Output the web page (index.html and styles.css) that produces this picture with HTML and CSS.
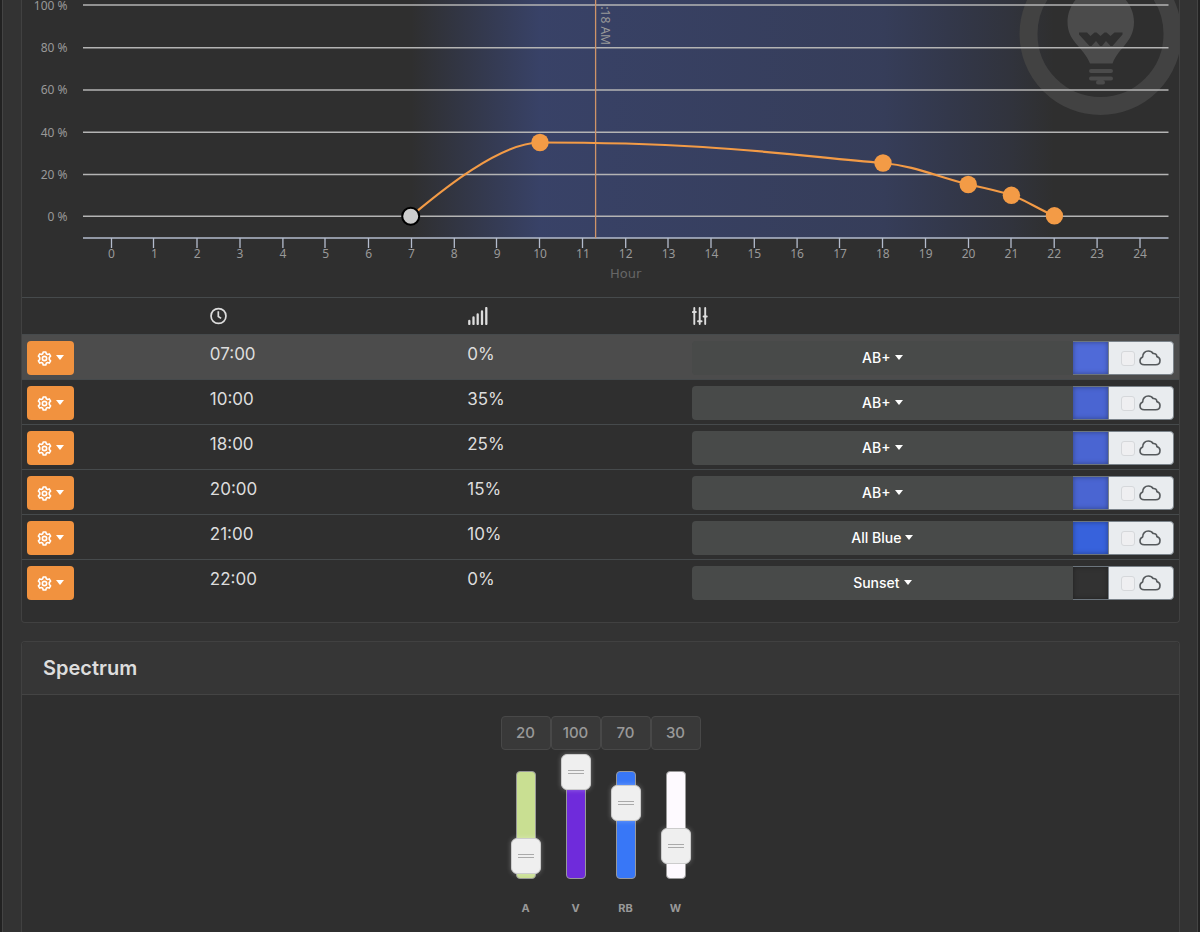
FILE: index.html
```html
<!DOCTYPE html>
<html lang="en">
<head>
<meta charset="utf-8">
<title>Light schedule</title>
<link rel="stylesheet" href="styles.css">
</head>
<body>
<svg class="defs" aria-hidden="true">
  <symbol id="gear" viewBox="0 0 16 16"><g fill="none" stroke="currentColor" stroke-width="1.700" stroke-linejoin="round"><path d="M6.600 1h2.800l.5 2 1.200.7 2-.6 1.400 2.400-1.400 1.500v2l1.400 1.500-1.400 2.400-2-.6-1.200.7-.5 2H6.600l-.5-2-1.200-.7-2 .6-1.400-2.400 1.400-1.500V7L1.500 5.500l1.400-2.400 2 .6L6.100 3z"/><circle cx="8" cy="8" r="2.300"/></g></symbol>
  <symbol id="cloud" viewBox="0 0 22 16"><path d="M5.300 14.800C2.800 14.800 1 13.100 1 10.800 1 9 2 7.500 3.700 6.900 3.500 3.400 6.200 1 9.300 1c2.200 0 3.900 1 4.800 2.500 2.100-.2 3.700 1 3.800 3.100 2 .5 3.100 1.900 3.100 3.900 0 2.500-1.800 4.300-4.300 4.300z" fill="none" stroke="currentColor" stroke-width="1.600" stroke-linejoin="round"/></symbol>
</svg>
<main class="page">
  <section class="card">
    <svg class="chart" viewBox="22 0 1157 297" role="img" aria-label="Intensity by hour">
      <defs>
        <linearGradient id="sky" gradientUnits="userSpaceOnUse" x1="411" x2="1054" y1="0" y2="0">
          <stop offset="0" stop-color="#4a6cf0" stop-opacity="0"/>
          <stop offset=".2" stop-color="#4f70f0" stop-opacity=".29"/>
          <stop offset=".733" stop-color="#4f70f0" stop-opacity=".22"/>
          <stop offset=".867" stop-color="#4a6cf0" stop-opacity=".12"/>
          <stop offset=".933" stop-color="#4a6cf0" stop-opacity=".07"/>
          <stop offset="1" stop-color="#4a6cf0" stop-opacity="0"/>
        </linearGradient>
      </defs>
      <rect x="411" y="0" width="643" height="238" fill="url(#sky)"/>
      <g class="watermark">
        <circle cx="1100.500" cy="34" r="72" fill="none" stroke="#424242" stroke-width="18"/>
        <path d="M1067.500 22C1067.500 4 1082-12 1100.500-12S1134 4 1134 22c0 20-15 25-21.500 41.500h-22.500C1083 46 1067.500 42 1067.500 22z" fill="#4b4b4b"/>
        <path d="M1079 32.500h8l3.500 3.500 4-3.500h2l4 3.500 4-3.500h2l4 3.500 4-3.500h8v2l-10 11.500h-2l-4.500-5-4 5h-2l-4-5-4.500 5h-2l-10.500-11.500z" fill="#2f2f2f"/>
        <path d="M1091 71h20M1091 78.500h20M1098 82.500h5" stroke="#4b4b4b" stroke-width="4" stroke-linecap="round"/>
      </g>
      <path class="grid" d="M83 5h1085.500M83 47.800h1085.500M83 90h1085.500M83 132.200h1085.500M83 174.400h1085.500M83 216.300h1085.500"/>
      <path class="axis" d="M83 238h1085.500M111.500 238v10M153.500 238v10M197 238v10M240 238v10M282.900 238v10M325 238v10M368.500 238v10M411.500 238v10M454.300 238v10M496.500 238v10M539.500 238v10M582.500 238v10M625.700 238v10M668 238v10M711 238v10M754.300 238v10M797.100 238v10M839.500 238v10M882.500 238v10M925.500 238v10M968.500 238v10M1011 238v10M1054.200 238v10M1097.100 238v10M1140 238v10"/>
      <g class="labels" text-anchor="end">
        <text x="67.500" y="10">100 %</text><text x="67.500" y="52">80 %</text><text x="67.500" y="94">60 %</text><text x="67.500" y="137">40 %</text><text x="67.500" y="179">20 %</text><text x="67.500" y="221">0 %</text>
      </g>
      <g class="labels" text-anchor="middle">
        <text x="111.500" y="258">0</text><text x="154.400" y="258">1</text><text x="197.200" y="258">2</text><text x="240" y="258">3</text><text x="282.900" y="258">4</text><text x="325.800" y="258">5</text><text x="368.600" y="258">6</text><text x="411.500" y="258">7</text><text x="454.300" y="258">8</text><text x="497.200" y="258">9</text><text x="540" y="258">10</text><text x="582.900" y="258">11</text><text x="625.700" y="258">12</text><text x="668.600" y="258">13</text><text x="711.400" y="258">14</text><text x="754.300" y="258">15</text><text x="797.100" y="258">16</text><text x="840" y="258">17</text><text x="882.800" y="258">18</text><text x="925.700" y="258">19</text><text x="968.500" y="258">20</text><text x="1011.400" y="258">21</text><text x="1054.200" y="258">22</text><text x="1097.100" y="258">23</text><text x="1140" y="258">24</text>
      </g>
      <text class="axis-title" x="625.700" y="278" text-anchor="middle">Hour</text>
      <path class="now" d="M595.600 0v238"/>
      <text class="now-label" text-anchor="end" transform="translate(601 45) rotate(90)">:18 AM</text>
      <path class="curve" d="M411 216C425 205 495 142.500 540 142.500C711 142.500 780 154 882.800 163C915 166 935 176 968.500 184.500C985 188 995 190 1011.400 195C1025 200 1040 210 1054.200 215.800"/>
      <g class="points"><circle cx="540" cy="142.500" r="8.700"/><circle cx="883" cy="163" r="8.700"/><circle cx="968.200" cy="184.500" r="8.700"/><circle cx="1011.400" cy="195.300" r="8.700"/><circle cx="1054.400" cy="215.800" r="8.700"/></g>
      <circle class="active-point" cx="410.700" cy="216.200" r="8.500"/>
    </svg>
    <table class="schedule">
      <colgroup><col class="col-menu"><col class="col-time"><col class="col-level"><col></colgroup>
      <thead>
        <tr>
          <th></th>
          <th><svg class="head-icon" width="17" height="18" viewBox="0 0 18 18" role="img" aria-label="Time"><g fill="none" stroke="#ddd" stroke-width="1.800"><circle cx="9" cy="9" r="7.900"/><path d="M8.800 4v5.500l3 2"/></g></svg></th>
          <th><svg class="head-icon" width="22" height="18" viewBox="0 0 22 18" role="img" aria-label="Intensity"><path d="M2.300 17v-3M6.500 17v-6.500M10.700 17V7.500M15 17V4.500M19.300 17V1" fill="none" stroke="#ddd" stroke-width="2.300" stroke-linecap="round"/></svg></th>
          <th><svg class="head-icon" width="16" height="18" viewBox="0 0 16 18" role="img" aria-label="Spectrum"><path d="M2.300 1v16M7.700 1v16M13.200 1v16M.9 5h3M6 14.200h3.600M11.600 9.500h3.200" fill="none" stroke="#ddd" stroke-width="1.900" stroke-linecap="round"/></svg></th>
        </tr>
      </thead>
      <tbody id="rows"></tbody>
    </table>
  </section>

  <section class="card spectrum">
    <h2 class="card-title">Spectrum</h2>
    <div class="mixer" id="mixer"></div>
  </section>
</main>
<script src="app.js"></script>
</body>
</html>
```

FILE: app.js
```js
const points = [
  ["07:00", "0%", "AB+", "#4f6ad8"],
  ["10:00", "35%", "AB+", "#4a65d2"],
  ["18:00", "25%", "AB+", "#4a65d2"],
  ["20:00", "15%", "AB+", "#4a65d2"],
  ["21:00", "10%", "All Blue", "#3762dc"],
  ["22:00", "0%", "Sunset", "#323232"]
];
document.getElementById("rows").innerHTML = points.map(([time, level, preset, color], i) => `
  <tr${i === 0 ? ' class="selected"' : ""}>
    <td><button class="menu" type="button" aria-label="Options for ${time}"><svg width="15" height="15"><use href="#gear"/></svg><span class="caret"></span></button></td>
    <td>${time}</td>
    <td>${level}</td>
    <td><div class="group">
      <button class="preset" type="button">${preset}<span class="caret"></span></button>
      <span class="swatch" style="background-color:${color}"></span>
      <label class="clouds"><input type="checkbox" aria-label="Clouds at ${time}"><svg width="22" height="16"><use href="#cloud"/></svg></label>
    </div></td>
  </tr>`).join("");

const channels = [["A", 20, "#c9df92"], ["V", 100, "#6f2bdb"], ["RB", 70, "#3877f7"], ["W", 30, "#fefaff"]];
document.getElementById("mixer").innerHTML = channels.map(([name, value, color]) => `
  <div class="channel">
    <input class="amount" type="text" value="${value}" aria-label="${name} value">
    <div class="fader"><span class="rail" style="background-color:${color}"></span><input id="ch-${name}" type="range" min="0" max="100" value="${value}"></div>
    <label class="channel-name" for="ch-${name}">${name}</label>
  </div>`).join("");
```

FILE: styles.css
```css
* { box-sizing: border-box; }

body {
  margin: 0;
  padding: 0 2px;
  background: #222;
  color: #ddd;
  font: 17px/26px Inter, "Liberation Sans", sans-serif;
}

.defs { position: absolute; width: 0; height: 0; }

.page {
  display: flex;
  flex-direction: column;
  gap: 18px;
  min-height: 100vh;
  padding: 0 17px 0 18px;
  background: #333;
  border: solid #444;
  border-width: 0 1px;
}

.card {
  background: #2f2f2f;
  border: 1px solid #414141;
  border-radius: 4px;
}

.card:first-child {
  padding-bottom: 17px;
  border-top: 0;
  border-radius: 0 0 4px 4px;
}

.chart { display: block; width: 100%; height: auto; }
.grid { fill: none; stroke: #b4b4b4; stroke-width: 1.5; }
.axis { fill: none; stroke: #b4bccd; stroke-width: 1.3; }
.labels text { fill: #999; font: 12px "Noto Sans", sans-serif; }
.axis-title { fill: #666; font: 13px "DejaVu Sans", sans-serif; }
.now { stroke: #cf9468; stroke-width: 1.3; }
.now-label { fill: #999; font: 12px "Noto Sans", sans-serif; }
.curve { fill: none; stroke: #f39b46; stroke-width: 2.2; }
.points { fill: #f39b46; }
.active-point { fill: #ccc; stroke: #000; stroke-width: 2; }

.schedule { width: 100%; table-layout: fixed; border-collapse: collapse; }
.col-menu { width: 15.8%; }
.col-time { width: 22.25%; }
.col-level { width: 19.4%; }
.schedule th, .schedule td { text-align: left; vertical-align: top; border-top: 1px solid #464a4c; }
.schedule th { height: 37px; padding: 9px 5px 0; line-height: 0; }
.schedule td { height: 45px; padding: 6px 5px 4px; }
.selected { background: #4c4c4c; }
.head-icon { display: inline-block; }

button { font: inherit; color: #fff; border: 0; padding: 0; }

.menu {
  display: flex;
  align-items: center;
  justify-content: center;
  gap: 4px;
  width: 47px;
  height: 34px;
  background: #f1923f;
  border-radius: 4px;
}

.caret {
  width: 0;
  height: 0;
  margin-bottom: 1px;
  border: solid transparent;
  border-width: 5px 4px 0;
  border-top-color: #fff;
}

.group { display: flex; height: 34px; }

.preset {
  flex: 1;
  display: flex;
  align-items: center;
  justify-content: center;
  gap: 4px;
  background: #484a49;
  border-radius: 4px 0 0 4px;
  font-size: 14px;
  font-weight: 500;
}

.swatch {
  width: 35px;
  border: solid #6c757d;
  border-width: 1px 0;
  box-shadow: inset 0 0 5px rgba(0, 0, 0, .35);
}

.clouds {
  display: flex;
  align-items: center;
  justify-content: center;
  gap: 4px;
  width: 66px;
  padding-right: 1px;
  color: #55595c;
  background: #e9ecef;
  border: 1px solid #7b838a;
  border-radius: 0 4px 4px 0;
}

.clouds input {
  appearance: none;
  width: 14px;
  height: 15px;
  margin: 0;
  background: #efeff1;
  border: 1px solid #d6d8db;
  border-radius: 3px;
}

.card-title {
  margin: 0;
  padding: 13px 21px;
  background: #363636;
  border-bottom: 1px solid #444;
  border-radius: 4px 4px 0 0;
  font-size: 20px;
  font-weight: 600;
  line-height: 26px;
}

.spectrum { flex: 1; border-bottom: 0; border-radius: 4px 4px 0 0; }
.mixer { display: flex; justify-content: center; padding-top: 21px; }

.channel {
  display: flex;
  flex-direction: column;
  align-items: center;
  width: 50px;
}

.amount {
  width: 100%;
  height: 34px;
  padding: 0;
  text-align: center;
  color: #999;
  background: #393939;
  border: 1px solid #484848;
  border-radius: 4px;
  font: 500 15px Inter, sans-serif;
}

.fader { display: grid; place-items: center; height: 142px; margin-top: 4px; }
.fader > * { grid-area: 1 / 1; }
.rail { width: 20px; height: 108px; border: 1px solid #999; border-radius: 4px; }

.fader input {
  appearance: none;
  writing-mode: vertical-lr;
  direction: rtl;
  width: 30px;
  height: 142px;
  margin: 0;
  background: transparent;
}

.fader input::-webkit-slider-thumb {
  appearance: none;
  width: 30px;
  height: 36px;
  border: 1px solid #ccc;
  border-radius: 6px;
  background:
    linear-gradient(#aaa, #aaa) 50% 15px / 16px 1px no-repeat,
    linear-gradient(#aaa, #aaa) 50% 18px / 16px 1px no-repeat,
    #efefef;
  box-shadow: 0 0 5px rgba(255, 255, 255, .3);
}

.channel-name { color: #999; font-size: 11px; font-weight: 700; line-height: 24px; }
```
